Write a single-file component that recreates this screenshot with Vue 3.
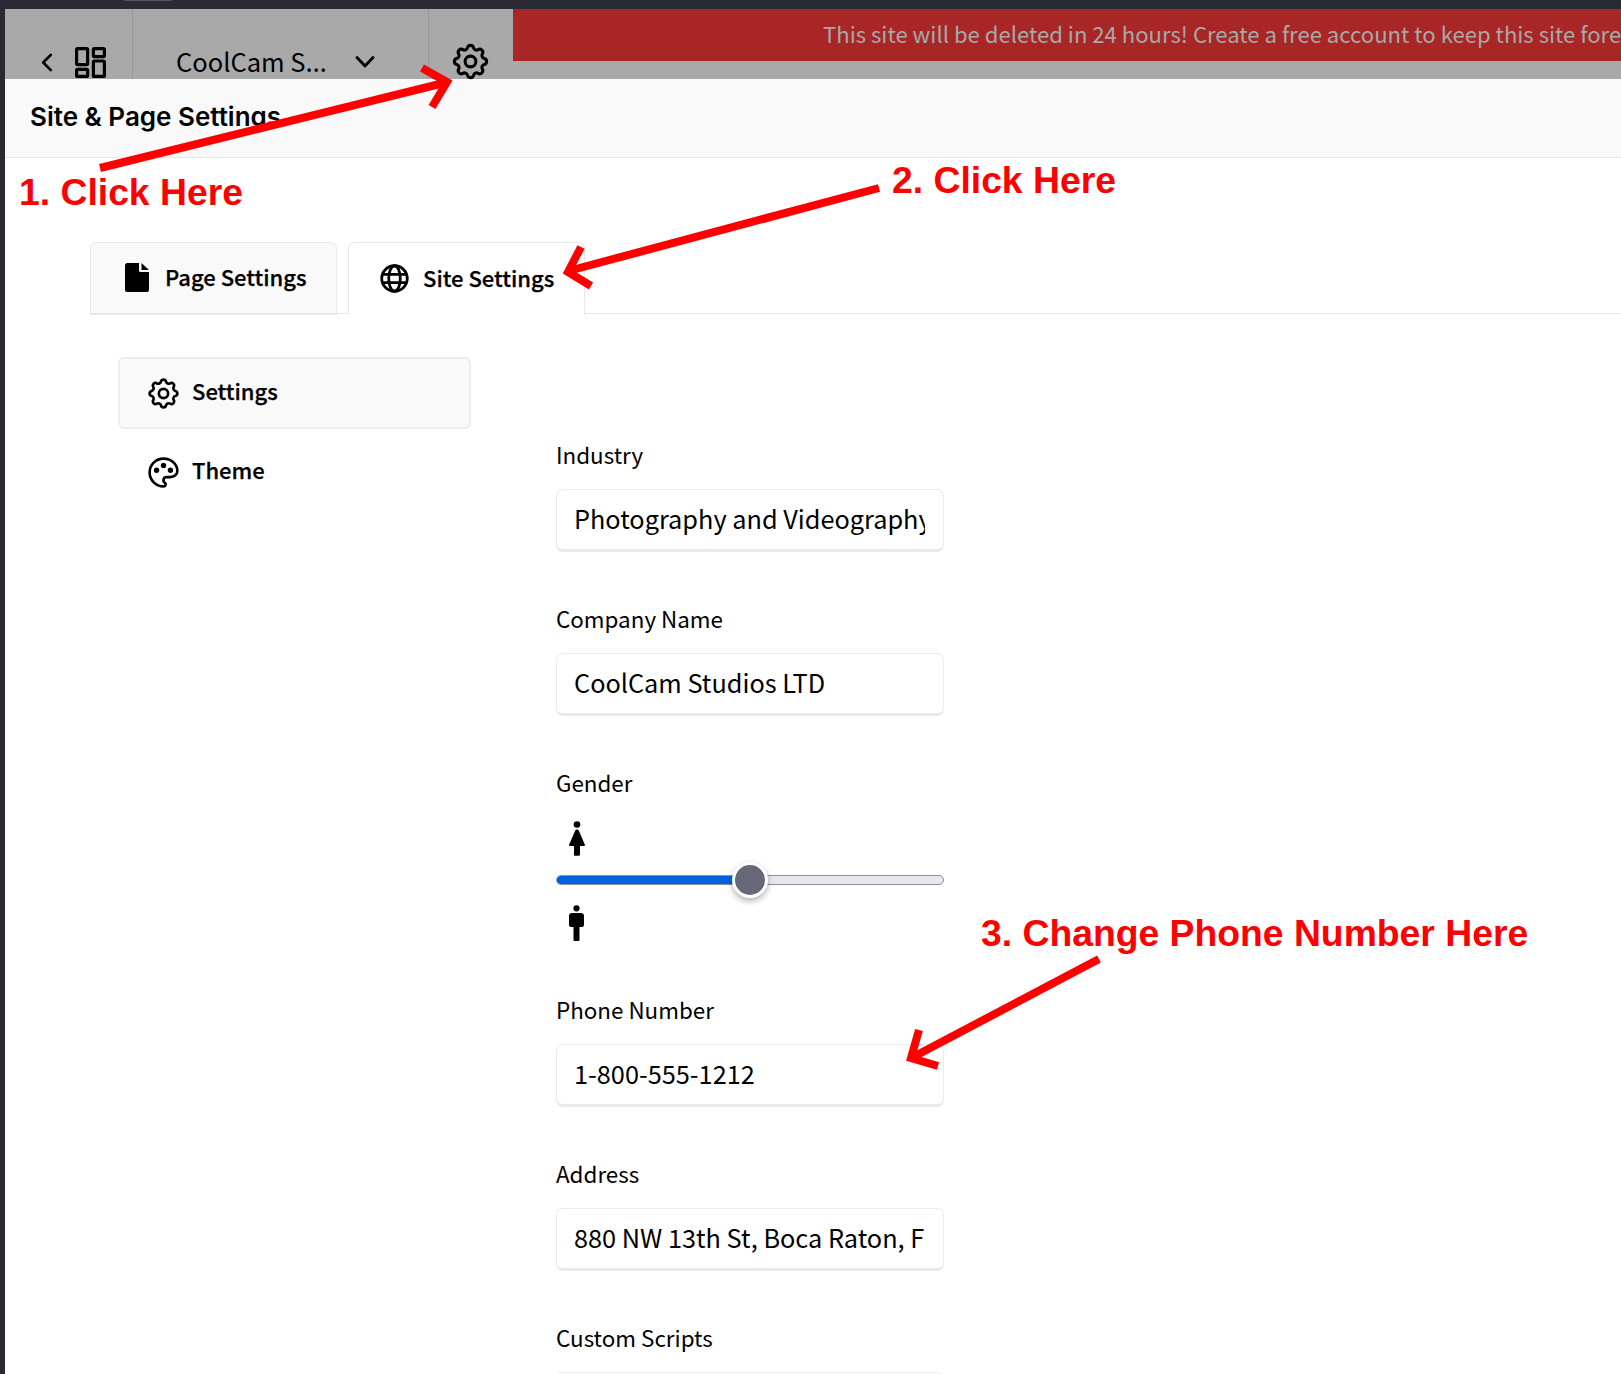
<script setup>
const fields = [
  { label: 'Industry', value: 'Photography and Videography' },
  { label: 'Company Name', value: 'CoolCam Studios LTD' },
]
const fieldsAfter = [
  { label: 'Phone Number', value: '1-800-555-1212' },
  { label: 'Address', value: '880 NW 13th St, Boca Raton, F' },
]
const gearPath = 'M10.325 4.317c.426 -1.756 2.924 -1.756 3.35 0a1.724 1.724 0 0 0 2.573 1.066c1.543 -.94 3.31 .826 2.37 2.37a1.724 1.724 0 0 0 1.065 2.572c1.756 .426 1.756 2.924 0 3.35a1.724 1.724 0 0 0 -1.066 2.573c.94 1.543 -.826 3.31 -2.37 2.37a1.724 1.724 0 0 0 -2.572 1.065c-.426 1.756 -2.924 1.756 -3.35 0a1.724 1.724 0 0 0 -2.573 -1.066c-1.543 .94 -3.31 -.826 -2.37 -2.37a1.724 1.724 0 0 0 -1.065 -2.572c-1.756 -.426 -1.756 -2.924 0 -3.35a1.724 1.724 0 0 0 1.066 -2.573c-.94 -1.543 .826 -3.31 2.37 -2.37c1 .608 2.296 .07 2.572 -1.065z'
</script>

<template>
  <div class="page">
    <div class="strip"><span class="strip-tab"></span></div>
    <div class="shell">
      <div class="bar">
        <div class="cell cell-nav">
          <svg class="back" viewBox="0 0 12 20" fill="none" stroke="#000" stroke-width="2.8" stroke-linecap="round" stroke-linejoin="round"><path d="M10 2 2 10l8 8" /></svg>
          <svg class="grid" viewBox="0 0 31 31" fill="none" stroke="#000" stroke-width="3.2" stroke-linejoin="round">
            <rect x="1.6" y="1.6" width="11" height="16" rx="1" />
            <rect x="18.4" y="1.6" width="11" height="8" rx="1" />
            <rect x="1.6" y="22.4" width="11" height="7" rx="1" />
            <rect x="18.4" y="14" width="11" height="15.4" rx="1" />
          </svg>
        </div>
        <div class="cell cell-site">
          <span class="site-name">CoolCam S<span class="dots">…</span></span>
          <svg class="caret" viewBox="0 0 20 14" fill="none" stroke="#000" stroke-width="2.8" stroke-linecap="round" stroke-linejoin="round"><path d="M2 2.5 10 11l8-8.5" /></svg>
        </div>
        <div class="cell cell-gear">
          <svg class="gear-top" viewBox="0 0 24 24" fill="none" stroke="#000" stroke-width="1.7" stroke-linecap="round" stroke-linejoin="round">
            <path :d="gearPath" /><circle cx="12" cy="12" r="3" />
          </svg>
        </div>
        <div class="cell-banner">
          <div class="banner">This site will be deleted in 24 hours! Create a free account to keep this site forever.</div>
        </div>
      </div>

      <header class="head"><h1>Site &amp; Page Settings</h1></header>

      <div class="tabs">
        <div class="tab tab-page">
          <svg class="tab-icon" viewBox="0 0 24 29" fill="#000"><path d="M2.5 0H14v7.5a1.5 1.5 0 0 0 1.5 1.5H24v18a2 2 0 0 1-2 2H2a2 2 0 0 1-2-2V2.500A2.500 2.500 0 0 1 2.500 0Zm14 0L24 7h-7.500Z" /></svg>
          <span class="tab-text">Page Settings</span>
        </div>
        <div class="tab tab-site">
          <svg class="tab-icon" viewBox="0 0 30 30" fill="none" stroke="#000" stroke-width="2.9">
            <circle cx="15" cy="15" r="13.2" />
            <ellipse cx="15" cy="15" rx="6" ry="13.2" />
            <path d="M2.500 10.800h25M2.500 19.200h25" />
          </svg>
          <span class="tab-text">Site Settings</span>
        </div>
      </div>

      <div class="body">
        <nav class="side">
          <div class="side-item side-active">
            <svg class="side-icon" viewBox="0 0 24 24" fill="none" stroke="#000" stroke-width="1.7" stroke-linecap="round" stroke-linejoin="round">
              <path :d="gearPath" /><circle cx="12" cy="12" r="3" />
            </svg>
            <span class="side-text">Settings</span>
          </div>
          <div class="side-item">
            <svg class="side-icon" viewBox="0 0 24 24" fill="none" stroke="#000" stroke-width="1.7" stroke-linecap="round" stroke-linejoin="round">
              <path d="M12 21a9 9 0 0 1 0 -18c4.970 0 9 3.582 9 8c0 1.060 -.474 2.078 -1.318 2.828c-.844 .75 -1.989 1.172 -3.182 1.172h-2.500a2 2 0 0 0 -1 3.750a1.300 1.300 0 0 1 -1 2.250" />
              <circle cx="7.500" cy="10.500" r=".9" fill="#000" />
              <circle cx="12" cy="7.500" r=".9" fill="#000" />
              <circle cx="16.500" cy="10.500" r=".9" fill="#000" />
            </svg>
            <span class="side-text">Theme</span>
          </div>
        </nav>

        <form class="form" @submit.prevent>
          <div v-for="f in fields" :key="f.label" class="field">
            <div class="label">{{ f.label }}</div>
            <div class="input"><span class="input-text">{{ f.value }}</span></div>
          </div>

          <div class="field field-gender">
            <div class="label">Gender</div>
            <svg class="person person-f" viewBox="0 0 16 35" fill="#000">
              <circle cx="8" cy="3.500" r="3.300" />
              <path d="M8 8.500c1 0 1.600.5 2 1.500l5.800 13.500c.3.8-.1 1.500-1 1.500H11v8.500a1.300 1.300 0 0 1-1.300 1.300H6.300A1.300 1.300 0 0 1 5 34.500V25H1.200c-.9 0-1.300-.7-1-1.500L6 10c.4-1 1-1.500 2-1.500Z" />
            </svg>
            <div class="slider">
              <div class="track"><div class="fill"></div></div>
              <div class="thumb"></div>
            </div>
            <svg class="person person-m" viewBox="0 0 15 36" fill="#000">
              <circle cx="7.500" cy="3.300" r="3.100" />
              <path d="M3 8h9a3 3 0 0 1 3 3v9a2 2 0 0 1-2 2h-2.500v12.500A1.300 1.300 0 0 1 9.200 36H5.800a1.300 1.300 0 0 1-1.300-1.500V22H2a2 2 0 0 1-2-2v-9a3 3 0 0 1 3-3Z" />
            </svg>
          </div>

          <div v-for="f in fieldsAfter" :key="f.label" class="field">
            <div class="label">{{ f.label }}</div>
            <div class="input"><span class="input-text">{{ f.value }}</span></div>
          </div>

          <div class="field">
            <div class="label">Custom Scripts</div>
            <div class="input"></div>
          </div>
        </form>
      </div>
    </div>

    <svg class="arrows" viewBox="0 0 1621 1374" fill="none" stroke="#ff0000" stroke-width="8">
      <path d="M100 168 444 83" />
      <path d="M422 68 447 82 432 107" />
      <path d="M879 188 572 270" />
      <path d="M581 247 568 272 591 286" />
      <path d="M1099 959 915 1056" />
      <path d="M919 1030 911 1058 938 1066" />
    </svg>
    <div class="note note-1">1. Click Here</div>
    <div class="note note-2">2. Click Here</div>
    <div class="note note-3">3. Change Phone Number Here</div>
  </div>
</template>

<style scoped>
.page {
  position: relative;
  width: 1621px;
  height: 1374px;
  overflow: hidden;
  background: #2a2a35;
  font-family: "Noto Sans CJK JP", "Noto Sans", sans-serif;
  color: #000;
}
.strip { height: 9px; position: relative; }
.strip-tab {
  position: absolute;
  left: 124px;
  top: 0;
  width: 48px;
  height: 1px;
  background: #55555f;
}
.shell {
  margin-left: 5px;
  height: 1365px;
  background: #fff;
  overflow: hidden;
}
.bar {
  display: flex;
  height: 70px;
  background: #a9a9a9;
}
.cell {
  display: flex;
  align-items: center;
  border-right: 1px solid #9a9a9a;
  flex: none;
  padding-top: 36px;
  box-sizing: border-box;
  height: 70px;
}
.cell-nav { width: 128px; padding-left: 36px; }
.back { width: 12px; height: 19px; margin-right: 22px; flex: none; }
.grid { width: 31px; height: 31px; flex: none; }
.cell-site { width: 296px; padding-left: 43px; }
.site-name {
  width: 153px;
  font-size: 25.500px;
  line-height: 34px;
  white-space: nowrap;
  flex: none;
  margin-bottom: 2px;
}
.dots { font-family: "Noto Sans", sans-serif; font-size: 27px; }
.caret { width: 20px; height: 14px; margin-left: 26px; flex: none; }
.cell-gear { width: 84px; padding-left: 20px; border-right: none; }
.gear-top { width: 43px; height: 43px; flex: none; margin-top: -2px; }
.cell-banner { flex: 1; min-width: 0; }
.banner {
  height: 52px;
  background: #a82626;
  color: #a8a8a8;
  font-size: 22.100px;
  line-height: 48px;
  padding-left: 310px;
  white-space: nowrap;
  overflow: hidden;
}
.head {
  height: 76px;
  background: #f9f9f9;
  border-bottom: 1px solid #e8e8e8;
  display: flex;
  align-items: center;
  padding: 0 0 2px 25px;
  box-sizing: content-box;
}
.head h1 {
  margin: 0 0 2px;
  font-family: Inter, sans-serif;
  font-size: 26px;
  font-weight: 600;
}
.tabs {
  display: flex;
  margin: 84px 0 0 85px;
  gap: 11px;
  height: 71px;
  border-bottom: 1px solid #e8e8e8;
}
.tab {
  height: 73px;
  box-sizing: border-box;
  border: 1px solid #e8e8e8;
  border-radius: 6px 6px 0 0;
  display: flex;
  align-items: center;
  font-size: 22px;
  font-weight: 500;
  padding-bottom: 2px;
  -webkit-text-stroke: 0.25px #000;
}
.tab-text { margin-bottom: 2px; }
.tab-page { width: 247px; background: #f9f9f9; border-bottom: 2px solid #e8e8e8; padding-left: 34px; gap: 16px; }
.tab-site { width: 237px; background: #fff; border-bottom: none; padding-left: 31px; gap: 14px; }
.tab-icon { height: 29px; width: auto; flex: none; }
.body { display: flex; padding-left: 113px; }
.side { width: 353px; margin-top: 43px; flex: none; }
.side-item {
  height: 72px;
  box-sizing: border-box;
  border: 2px solid transparent;
  border-radius: 6px;
  display: flex;
  align-items: center;
  padding-left: 25px;
  gap: 10px;
  font-size: 22px;
  font-weight: 500;
  margin-bottom: 7px;
  -webkit-text-stroke: 0.25px #000;
}
.side-text { margin-bottom: 7px; }
.side-active { background: #f9f9f9; border-color: #ececec; }
.side-icon { width: 37px; height: 37px; flex: none; }
.form { width: 388px; margin: 125px 0 0 85px; flex: none; }
.field { margin-bottom: 51px; }
.label { height: 32px; font-size: 22.400px; line-height: 30px; font-weight: 400; margin-bottom: 18px; }
.input {
  height: 63px;
  box-sizing: border-box;
  border: 1px solid #ececec;
  border-bottom: 3px solid #e9e9e9;
  border-radius: 7px;
  background: #fff;
  padding: 0 18px 0 17px;
  display: flex;
  align-items: center;
}
.input-text {
  display: block;
  width: 100%;
  overflow: hidden;
  white-space: nowrap;
  font-size: 25.300px;
  line-height: 36px;
  margin-bottom: 4px;
}
.field-gender { display: flex; flex-direction: column; margin-bottom: 53px; }
.field-gender .label { margin-bottom: 22px; }
.person { display: block; margin-left: 13px; flex: none; }
.person-f { width: 16px; height: 35px; }
.person-m { width: 15px; height: 36px; }
.slider { position: relative; height: 34px; margin: 7px 0 8px; display: flex; align-items: center; }
.track {
  width: 100%;
  height: 10px;
  box-sizing: border-box;
  border-radius: 5px;
  background: #e8e8ee;
  border: 1px solid #8d8d9c;
  overflow: hidden;
}
.fill { width: 50%; height: 100%; background: #0062e0; margin: -1px 0 0 -1px; padding: 1px; }
.thumb {
  position: absolute;
  left: 50%;
  top: 50%;
  width: 36px;
  height: 36px;
  box-sizing: border-box;
  margin: -18px 0 0 -18px;
  border-radius: 50%;
  background: #67677a;
  border: 3px solid #fff;
  box-shadow: 0 3px 6px rgba(0, 0, 0, 0.3);
}
.arrows {
  position: absolute;
  inset: 0;
  width: 1621px;
  height: 1374px;
  pointer-events: none;
}
.note {
  position: absolute;
  font-family: "Liberation Sans", Arial, sans-serif;
  font-weight: 700;
  font-size: 37.300px;
  line-height: 44px;
  color: #ff0000;
  white-space: nowrap;
}
.note-1 { left: 19px; top: 170px; }
.note-2 { left: 892px; top: 158px; }
.note-3 { left: 981px; top: 911px; }
</style>

<style>
html, body { margin: 0; background: #fff; }
</style>
